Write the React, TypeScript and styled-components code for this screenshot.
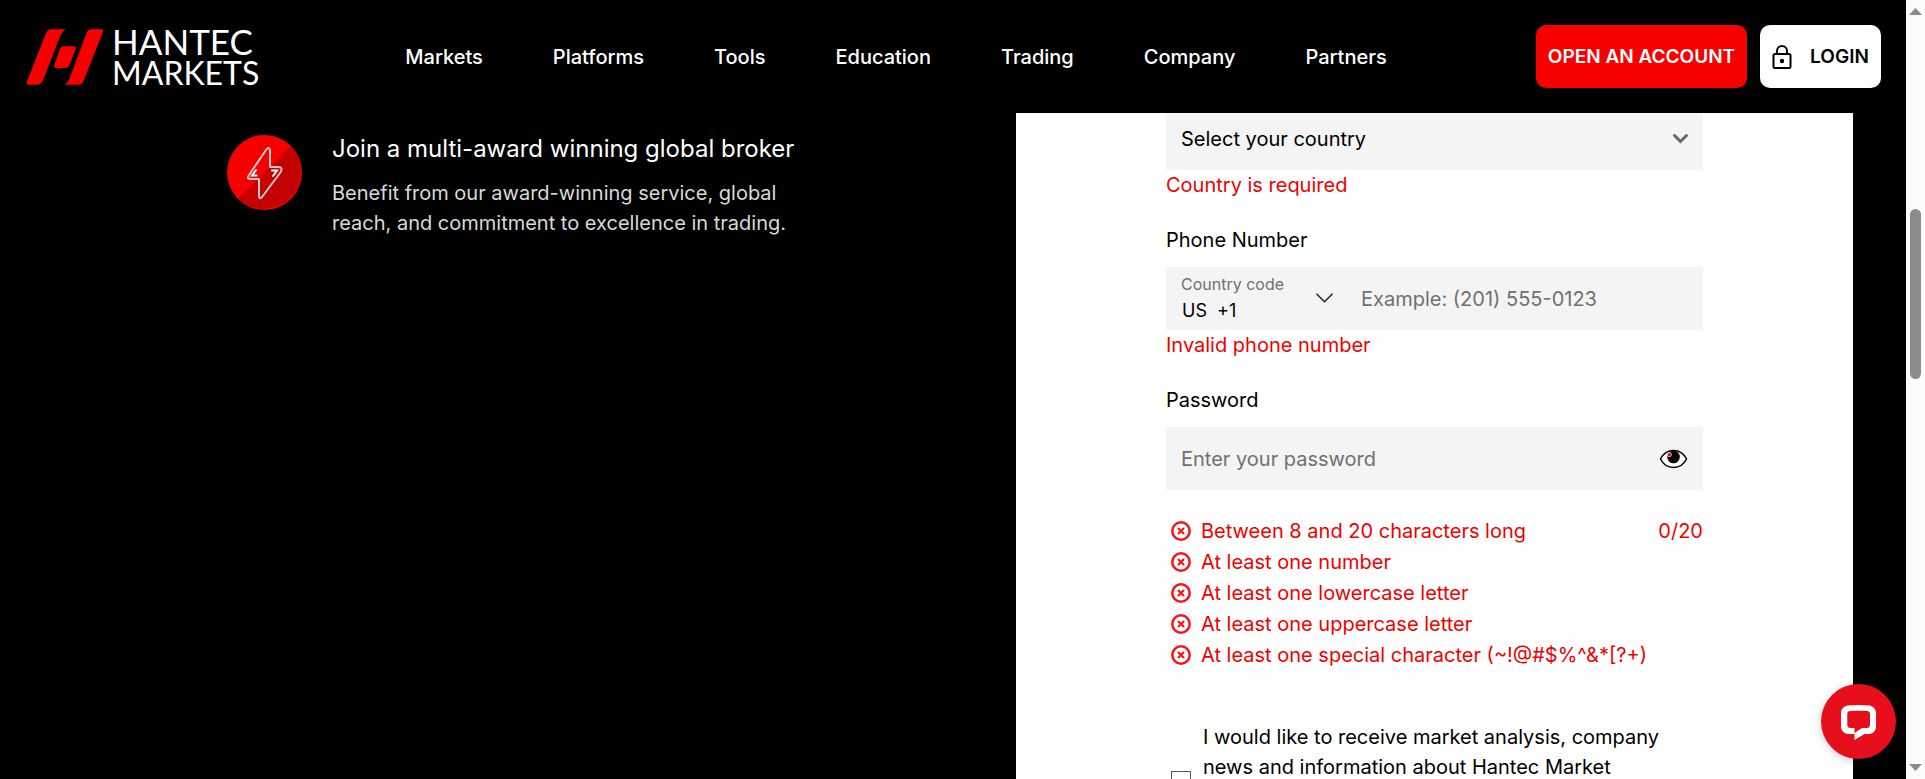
import React, { useState } from 'react';
import styled, { createGlobalStyle } from 'styled-components';

const GlobalStyle = createGlobalStyle`
  *, *::before, *::after { box-sizing: border-box; }
  body {
    margin: 0;
    background: #000;
    color: #000;
    font: 400 20px/30px Inter, "Open Sans", sans-serif;
  }
  button, input, select { font: inherit; color: inherit; }
`;

const Screen = styled.div`
  display: grid;
  grid-template-columns: minmax(0, 1fr) 19px;
  height: 100vh;
  overflow: hidden;
`;

const Page = styled.div`
  position: relative;
  min-height: 0;
  overflow: hidden;
`;

const Header = styled.header`
  position: absolute;
  inset: 0 0 auto 0;
  z-index: 2;
  display: flex;
  align-items: center;
  justify-content: space-between;
  height: 113px;
  padding: 0 25px 0 26px;
  background: #000;
`;

const Brand = styled.a`
  display: flex;
  align-items: center;
  gap: 8px;
  width: 230px;
  color: #fff;
  text-decoration: none;
`;

const Mark = styled.svg`
  flex: none;
`;

const BrandName = styled.span`
  display: flex;
  flex-direction: column;
  font-family: Lato, sans-serif;
  line-height: 32px;
`;

const BrandLine = styled.span<{ $size: number }>`
  font-size: ${(p) => p.$size}px;
`;

const Nav = styled.nav`
  display: flex;
  gap: 70px;
`;

const NavLink = styled.a`
  color: #fff;
  font-weight: 500;
  text-decoration: none;
`;

const Actions = styled.div`
  display: flex;
  gap: 13px;
`;

const ActionButton = styled.button<{ $primary?: boolean }>`
  display: flex;
  align-items: center;
  justify-content: center;
  gap: 18px;
  height: 63px;
  width: ${(p) => (p.$primary ? 211 : 121)}px;
  padding: 0;
  border: 0;
  border-radius: 10px;
  background: ${(p) => (p.$primary ? '#f70000' : '#fff')};
  color: ${(p) => (p.$primary ? '#fff' : '#000')};
  font-size: 19px;
  font-weight: 600;
  white-space: nowrap;
`;

const Main = styled.main`
  display: grid;
  grid-template-columns: minmax(0, 1016fr) minmax(0, 837fr);
  min-height: 100%;
  padding-right: 53px;
`;

const Benefits = styled.section`
  padding: 135px 190px 0 227px;
`;

const Benefit = styled.article`
  display: flex;
  gap: 30px;
`;

const BenefitIcon = styled.svg`
  flex: none;
`;

const BenefitTitle = styled.h2`
  margin: 0 0 15px;
  color: #fff;
  font-size: 24px;
  font-weight: 400;
  line-height: 28px;
  white-space: nowrap;
`;

const BenefitText = styled.p`
  margin: 0;
  color: #d9d9d9;
  white-space: nowrap;
`;

const Card = styled.section`
  padding: 107px 150px 0;
  background: #fff;
`;

const Form = styled.form`
  display: flex;
  flex-direction: column;
  gap: 25px;
`;

const Field = styled.div`
  display: flex;
  flex-direction: column;
`;

const Label = styled.label`
  margin-bottom: 12px;
`;

const Control = styled.div`
  display: grid;
  grid-template-columns: minmax(0, 1fr) auto;
  align-items: center;
  height: 63px;
  background: #f4f4f4;
`;

const PhoneControl = styled(Control)`
  grid-template-columns: 180px minmax(0, 1fr);
`;

const TextInput = styled.input`
  width: 100%;
  height: 100%;
  padding: 0 15px;
  border: 0;
  outline: 0;
  background: transparent;
  &::placeholder { color: #707070; opacity: 1; }
`;

const Select = styled.select`
  grid-area: 1 / 1 / 2 / 3;
  width: 100%;
  height: 100%;
  padding: 0 15px;
  border: 0;
  outline: 0;
  appearance: none;
  background: transparent;
`;

const SelectArrow = styled.svg`
  grid-area: 1 / 2;
  margin-right: 14px;
  pointer-events: none;
`;

const CodePicker = styled.div`
  display: grid;
  grid-template-columns: 150px 16px;
  grid-template-rows: 24px 28px;
  align-items: center;
  padding-bottom: 2px;
`;

const CodeLabel = styled.label`
  padding-left: 15px;
  color: #707070;
  font-size: 16px;
  line-height: 24px;
`;

const CodeSelect = styled.select`
  grid-area: 2 / 1 / 3 / 3;
  height: 28px;
  padding: 0 0 0 16px;
  border: 0;
  outline: 0;
  appearance: none;
  background: transparent;
  font-size: 18px;
`;

const CodeArrow = styled.svg`
  grid-area: 1 / 2 / 3 / 3;
  pointer-events: none;
`;

const ErrorText = styled.p`
  margin: 0;
  color: #f00000;
`;

const IconButton = styled.button`
  display: flex;
  margin-right: 15px;
  padding: 0;
  border: 0;
  background: transparent;
`;

const Rules = styled.ul`
  margin: 0;
  padding: 0 0 0 5px;
  list-style: none;
  color: #f00000;
`;

const Rule = styled.li`
  display: flex;
  align-items: center;
  gap: 10px;
  height: 31px;
`;

const Counter = styled.span`
  margin-left: auto;
`;

const Consent = styled.label`
  display: flex;
  gap: 12px;
  margin-top: 27px;
  padding-left: 5px;
`;

const Checkbox = styled.input`
  flex: none;
  width: 20px;
  height: 20px;
  margin: 49px 0 0;
  border: 1px solid #555;
  appearance: none;
  background: #fff;
`;

const ConsentText = styled.span`
  max-width: 480px;
`;

const ChatButton = styled.button`
  position: absolute;
  right: 10px;
  bottom: 20px;
  z-index: 3;
  display: flex;
  align-items: center;
  justify-content: center;
  width: 75px;
  height: 75px;
  padding: 0;
  border: 0;
  border-radius: 50%;
  background: #e60f1b;
  box-shadow: 0 2px 10px rgba(0, 0, 0, 0.2);
`;

const ScrollTrack = styled.div`
  display: flex;
  flex-direction: column;
  align-items: center;
  padding: 8px 0;
  background: #fcfcfc;
`;

const ScrollThumb = styled.div`
  width: 11px;
  height: 170px;
  margin: 194px 0 auto;
  border-radius: 6px;
  background: #8b8b8b;
`;

const navItems = ['Markets', 'Platforms', 'Tools', 'Education', 'Trading', 'Company', 'Partners'];

const rules = [
  'Between 8 and 20 characters long',
  'At least one number',
  'At least one lowercase letter',
  'At least one uppercase letter',
  'At least one special character (~!@#$%^&*[?+)',
];

const LogoMark = () => (
  <Mark width="78" height="56" viewBox="18 24 234 169" fill="#f70000" aria-hidden="true">
    <path d="M92 25H137C129 31 124 37 120 47L70 175C65 187 60 192 50 192H25Q17 192 20 183L77 38Q82 25 92 25Z" />
    <path d="M214 25H244Q252 25 249 34L192 179Q187 192 176 192H134C142 186 146 180 150 170L199 38Q204 25 214 25Z" />
    <path d="M130 76H161Q170 76 167 86L149 132Q145 142 135 142H108Q99 142 103 132L119 86Q123 76 130 76Z" />
  </Mark>
);

const BoltIcon = () => (
  <BenefitIcon width="75" height="75" viewBox="0 0 75 75" aria-hidden="true">
    <circle cx="37.5" cy="37.5" r="37.5" fill="#f70000" />
    <path d="M11 64A37.5 37.5 0 0 0 64 11Z" fill="#c40000" />
    <path
      d="M39 15L22 40Q19 44 24 44H32V61Q32 65 35 62L53 38Q57 32 51 32H43V15Q42 11 39 15Z"
      fill="none" stroke="#c8c8c8" strokeWidth="2" strokeLinejoin="round"
    />
    <path d="M29 35L25 40.500H29.500M45 35.500H50L46 41" fill="none" stroke="#fff" strokeWidth="2" strokeLinecap="round" />
  </BenefitIcon>
);

const LockIcon = () => (
  <svg width="20" height="24" viewBox="0 0 20 24" fill="none" stroke="#000" strokeWidth="2" aria-hidden="true">
    <rect x="1.500" y="9" width="17" height="14" rx="1.500" />
    <path d="M5 9V6a5 5 0 0 1 10 0v3" />
    <circle cx="10" cy="16" r="2.200" fill="#000" stroke="none" />
  </svg>
);

const CrossIcon = () => (
  <svg width="20" height="20" viewBox="0 0 20 20" fill="none" stroke="#f5141a" aria-hidden="true">
    <circle cx="10" cy="10" r="8.700" strokeWidth="2.500" />
    <path d="M7 7L13 13M13 7L7 13" strokeWidth="2.200" />
  </svg>
);

const EyeIcon = () => (
  <svg width="29" height="20" viewBox="0 0 28 20" aria-hidden="true">
    <path d="M1 10C4 4 9 1.500 14 1.500S24 4 27 10C24 16 19 18.500 14 18.500S4 16 1 10Z" fill="#fff" stroke="#000" strokeWidth="1.500" />
    <circle cx="14" cy="8" r="6.300" fill="#000" />
    <circle cx="9.800" cy="5.700" r="2.400" fill="#f4f4f4" />
    <circle cx="9.800" cy="5.700" r="1.700" fill="#f70000" />
  </svg>
);

const ScrollArrow = ({ down }: { down?: boolean }) => (
  <svg width="13" height="7" viewBox="0 0 13 7" aria-hidden="true">
    <path d={down ? 'M0 0H13L6.500 7Z' : 'M0 7H13L6.500 0Z'} fill="#8b8b8b" />
  </svg>
);

export default function App() {
  const [password, setPassword] = useState('');
  const [visible, setVisible] = useState(false);

  return (
    <>
      <GlobalStyle />
      <Screen>
        <Page>
          <Header>
            <Brand href="#">
              <LogoMark />
              <BrandName>
                <BrandLine $size={35}>HANTEC</BrandLine>
                <BrandLine $size={32}>MARKETS</BrandLine>
              </BrandName>
            </Brand>
            <Nav>
              {navItems.map((item) => (
                <NavLink key={item} href="#">{item}</NavLink>
              ))}
            </Nav>
            <Actions>
              <ActionButton $primary type="button">OPEN AN ACCOUNT</ActionButton>
              <ActionButton type="button"><LockIcon />LOGIN</ActionButton>
            </Actions>
          </Header>

          <Main>
            <Benefits>
              <Benefit>
                <BoltIcon />
                <div>
                  <BenefitTitle>Join a multi-award winning global broker</BenefitTitle>
                  <BenefitText>
                    Benefit from our award-winning service, global<br />
                    reach, and commitment to excellence in trading.
                  </BenefitText>
                </div>
              </Benefit>
            </Benefits>

            <Card>
              <Form>
                <Field>
                  <Control>
                    <Select aria-label="Country">
                      <option>Select your country</option>
                    </Select>
                    <SelectArrow width="17" height="11" viewBox="0 0 17 11" fill="none" stroke="#666" strokeWidth="3" strokeLinecap="round" aria-hidden="true">
                      <path d="M2.500 2.500L8.500 8.500L14.500 2.500" />
                    </SelectArrow>
                  </Control>
                  <ErrorText>Country is required</ErrorText>
                </Field>

                <Field>
                  <Label htmlFor="phone">Phone Number</Label>
                  <PhoneControl>
                    <CodePicker>
                      <CodeLabel htmlFor="code">Country code</CodeLabel>
                      <CodeSelect id="code">
                        <option>{'US\u00a0\u00a0+1'}</option>
                      </CodeSelect>
                      <CodeArrow width="17" height="10" viewBox="0 0 17 10" fill="none" stroke="#222" strokeWidth="1.500" aria-hidden="true">
                        <path d="M0.500 0.800L8.500 8.800L16.500 0.800" />
                      </CodeArrow>
                    </CodePicker>
                    <TextInput id="phone" type="tel" placeholder="Example: (201) 555-0123" />
                  </PhoneControl>
                  <ErrorText>Invalid phone number</ErrorText>
                </Field>

                <Field>
                  <Label htmlFor="password">Password</Label>
                  <Control>
                    <TextInput
                      id="password"
                      type={visible ? 'text' : 'password'}
                      placeholder="Enter your password"
                      value={password}
                      onChange={(e) => setPassword(e.target.value)}
                    />
                    <IconButton type="button" aria-label="Show password" onClick={() => setVisible(!visible)}>
                      <EyeIcon />
                    </IconButton>
                  </Control>
                </Field>

                <Rules>
                  {rules.map((rule, i) => (
                    <Rule key={rule}>
                      <CrossIcon />
                      {rule}
                      {i === 0 && <Counter>{password.length}/20</Counter>}
                    </Rule>
                  ))}
                </Rules>

                <Consent>
                  <Checkbox type="checkbox" />
                  <ConsentText>
                    I would like to receive market analysis, company news and information about Hantec Market
                  </ConsentText>
                </Consent>
              </Form>
            </Card>
          </Main>

          <ChatButton type="button" aria-label="Open chat">
            <svg width="37" height="36" viewBox="0 0 37 36" aria-hidden="true">
              <path
                fill="#fff" fillRule="evenodd"
                d="M8 1.500C16 .700 22 .700 29 1.500C33 2 35.500 4.500 36 8.500V23C35.500 27 33.500 29.500 29.500 30H24.500L14.500 36V30H8C4 29.500 1.500 27 1 23V8.500C1.500 4.500 4 2 8 1.500ZM10 7C8.500 7.200 7.500 8 7.300 9.500V21C7.500 23 8.500 24 10.500 24H14.500V29L22 24H27C28.700 24 29.700 23 30 21V9.500C29.700 8 28.800 7.200 27.500 7C21 6.500 16 6.500 10 7Z"
              />
            </svg>
          </ChatButton>
        </Page>

        <ScrollTrack aria-hidden="true">
          <ScrollArrow />
          <ScrollThumb />
          <ScrollArrow down />
        </ScrollTrack>
      </Screen>
    </>
  );
}
